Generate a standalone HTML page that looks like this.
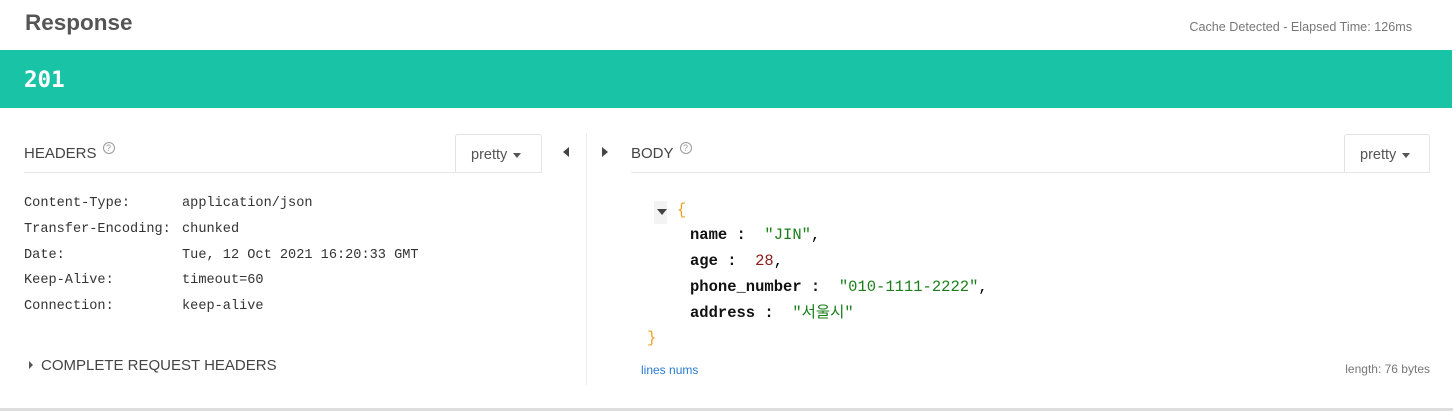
<!DOCTYPE html>
<html><head><meta charset="utf-8"><style>
body{margin:0;width:1453px;height:413px;background:#fff;position:relative;overflow:hidden;font-family:"Liberation Sans",sans-serif;}
.a{position:absolute;white-space:nowrap;}
.m{font-family:"Liberation Mono","Noto Sans CJK KR",monospace;font-size:13.6px;color:#333;line-height:16px;}
.j{font-family:"Liberation Mono","Noto Sans CJK KR",monospace;font-size:15.5px;line-height:20px;}
.k{font-weight:bold;color:#111;}
.s{color:#1a7f1a;}
.btn{position:absolute;border:1px solid #e3e3e3;border-bottom:none;border-radius:3px 3px 0 0;background:#fff;font-size:14.5px;color:#555;height:38px;line-height:40px;box-sizing:border-box;}
.car{display:inline-block;width:0;height:0;border-left:4px solid transparent;border-right:4px solid transparent;border-top:5px solid #555;vertical-align:middle;margin-left:6px;}
.q{display:inline-block;width:10px;height:10px;border:1px solid #999;border-radius:50%;font-size:9px;line-height:10px;text-align:center;color:#999;position:relative;top:-7px;margin-left:6px;}
</style></head><body>
<div class="a" style="left:25px;top:10px;font-size:22.5px;font-weight:bold;color:#555;">Response</div>
<div class="a" style="right:41px;top:20px;font-size:12.6px;color:#777;">Cache Detected - Elapsed Time: 126ms</div>
<div class="a" style="left:0;top:50px;width:1452px;height:58px;background:#19c4a6;"></div>
<div class="a" style="left:24px;top:67px;font-family:'DejaVu Sans Mono',monospace;font-weight:bold;font-size:22.5px;color:#fff;">201</div>

<div class="a" style="left:24px;top:145px;font-size:15px;color:#444;">HEADERS<span class="q">?</span></div>
<div class="a" style="left:24px;top:172px;width:518px;height:1px;background:#e6e6e6;"></div>
<div class="btn" style="left:455px;top:134px;width:87px;padding-left:15px;">pretty<span class="car"></span></div>
<div class="a" style="left:563px;top:147px;width:0;height:0;border-top:5px solid transparent;border-bottom:5px solid transparent;border-right:6px solid #444;"></div>
<div class="a" style="left:602px;top:147px;width:0;height:0;border-top:5px solid transparent;border-bottom:5px solid transparent;border-left:6px solid #444;"></div>
<div class="a" style="left:586px;top:133px;width:1px;height:252px;background:#ececec;"></div>

<div class="a m" style="left:24px;top:196px;">Content-Type:</div><div class="a m" style="left:182px;top:196px;">application/json</div>
<div class="a m" style="left:24px;top:222px;">Transfer-Encoding:</div><div class="a m" style="left:182px;top:222px;">chunked</div>
<div class="a m" style="left:24px;top:248px;">Date:</div><div class="a m" style="left:182px;top:248px;">Tue, 12 Oct 2021 16:20:33 GMT</div>
<div class="a m" style="left:24px;top:273px;">Keep-Alive:</div><div class="a m" style="left:182px;top:273px;">timeout=60</div>
<div class="a m" style="left:24px;top:299px;">Connection:</div><div class="a m" style="left:182px;top:299px;">keep-alive</div>
<div class="a" style="left:29px;top:361px;width:0;height:0;border-top:4px solid transparent;border-bottom:4px solid transparent;border-left:4px solid #555;"></div>
<div class="a" style="left:41px;top:357px;font-size:15px;color:#444;">COMPLETE REQUEST HEADERS</div>

<div class="a" style="left:631px;top:145px;font-size:15px;color:#444;">BODY<span class="q">?</span></div>
<div class="a" style="left:631px;top:172px;width:799px;height:1px;background:#e6e6e6;"></div>
<div class="btn" style="left:1344px;top:134px;width:86px;padding-left:15px;">pretty<span class="car"></span></div>

<div class="a" style="left:654px;top:201px;width:13px;height:23px;background:#f3f3f3;"></div>
<div class="a" style="left:657px;top:209px;width:0;height:0;border-left:5px solid transparent;border-right:5px solid transparent;border-top:6px solid #444;"></div>
<div class="a j" style="left:677px;top:200px;color:#f0a020;">{</div>
<div class="a j" style="left:690px;top:225px;"><span class="k">name :</span> &nbsp;<span class="s">"JIN"</span>,</div>
<div class="a j" style="left:690px;top:251px;"><span class="k">age :</span> &nbsp;<span style="color:#8b1a1a">28</span>,</div>
<div class="a j" style="left:690px;top:277px;"><span class="k">phone_number :</span> &nbsp;<span class="s">"010-1111-2222"</span>,</div>
<div class="a j" style="left:690px;top:303px;"><span class="k">address :</span> &nbsp;<span class="s">"서울시"</span></div>
<div class="a j" style="left:647px;top:328px;color:#f0a020;">}</div>
<div class="a" style="left:641px;top:363px;font-size:12px;color:#2a7ad0;">lines nums</div>
<div class="a" style="right:23px;top:362px;font-size:12px;color:#777;">length: 76 bytes</div>

<div class="a" style="left:0;top:408px;width:1453px;height:3px;background:#ddd;"></div>
</body></html>
